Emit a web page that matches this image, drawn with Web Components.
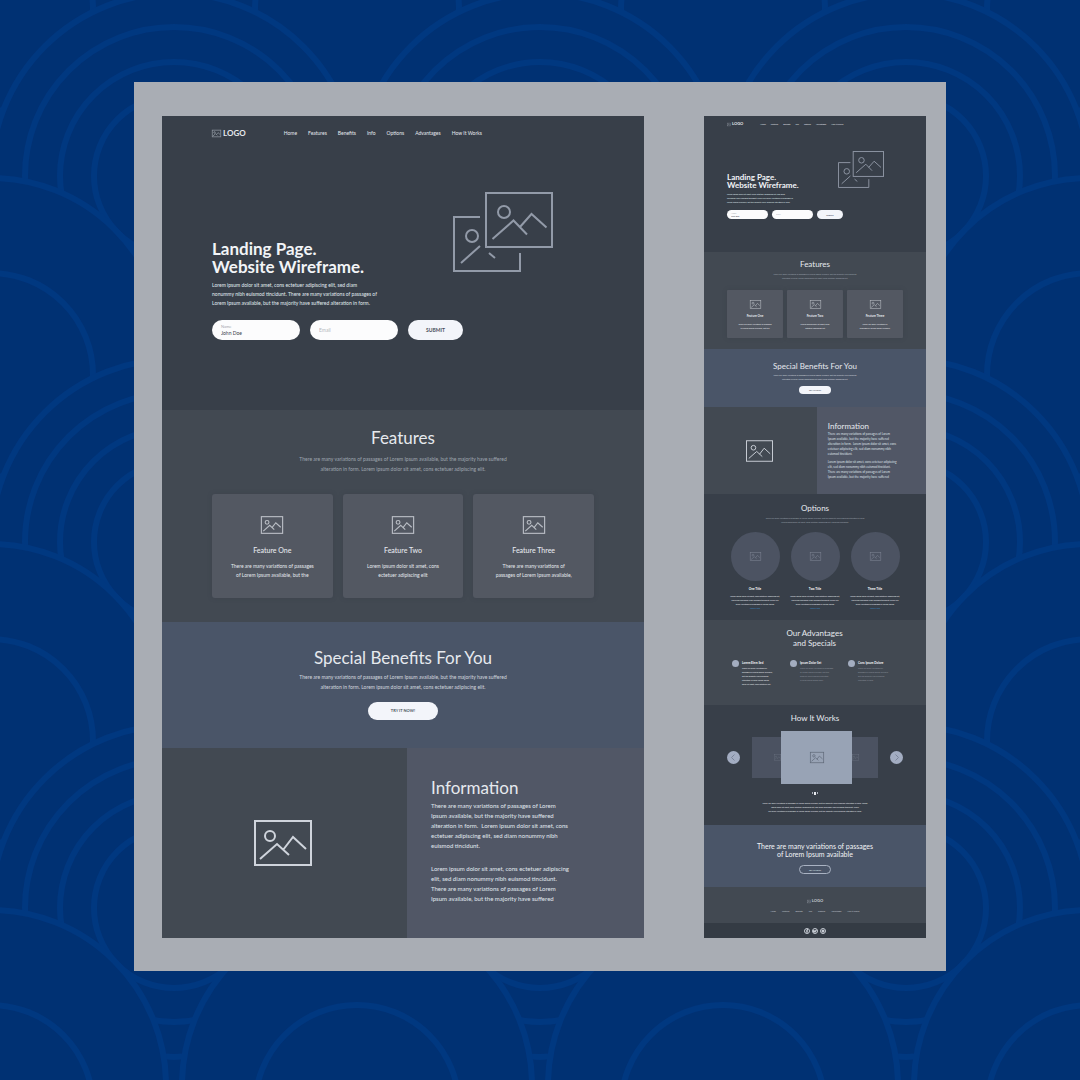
<!DOCTYPE html>
<html lang="en">
<head>
<meta charset="utf-8">
<title>Landing Page Website Wireframe</title>
<style>
  html, body { margin: 0; min-height: 100%; background: #003173; }
  body { font-family: Lato, "Open Sans", sans-serif; color: #e6e9ee; }
</style>
</head>
<body>
<wire-stage>
  <wire-page></wire-page>
  <wire-page compact></wire-page>
</wire-stage>

<script>
const define = (name, css, html) => customElements.define(name, class extends HTMLElement {
  constructor() {
    super();
    const t = document.createElement('template');
    t.innerHTML = `<style>*{box-sizing:border-box}h1,h2,h3,p{margin:0;font-weight:400}:host{display:block;box-sizing:border-box}${css}</style>` +
      (typeof html === 'function' ? html(this) : html);
    this.attachShadow({ mode: 'open' }).append(t.content.cloneNode(true));
  }
});

/* ---------- backdrop of overlapping scales ---------- */
const scaleRows = () => {
  let out = '';
  const ring = (x, y, r, fill) => `<circle cx="${x}" cy="${y}" r="${r}" fill="${fill}"/>`;
  for (let row = 0; row < 4; row++) {
    for (let i = -1; i < 4; i++) {
      const x = -9 + 366 * i, y = -13 + 366 * row;
      out += ring(x, y, 175, '#003173') + ring(x, y + 22, 102, 'none');
    }
    for (let i = -1; i < 4; i++) {
      const x = 174 + 366 * i, y = 176 + 366 * row;
      out += ring(x, y, 183, '#003173') + ring(x, y, 149, 'none') + ring(x, y, 114, 'none') + ring(x, y, 80, 'none');
    }
  }
  return out;
};
define('scale-backdrop',
  `:host{overflow:hidden} svg{display:block;width:100%;height:100%}`,
  () => `<svg viewBox="0 0 1080 1080" preserveAspectRatio="xMidYMin slice" stroke="#003880" stroke-width="6" aria-hidden="true">${scaleRows()}</svg>`);

/* ---------- pictures ---------- */
define('picture-icon',
  `svg{display:block;width:100%;height:100%;overflow:visible}`,
  el => `<svg viewBox="0 0 58 46" fill="none" stroke="currentColor" stroke-width="${el.getAttribute('stroke') || 2}" aria-hidden="true">
    <rect x="1" y="1" width="56" height="44"/><circle cx="16" cy="16" r="5"/>
    <path d="M6 39 23 24 35 35M29 30 39 17 52 29"/></svg>`);
define('picture-stack',
  `svg{display:block;width:100%;height:100%}`,
  `<svg viewBox="0 0 100 80" fill="none" stroke="currentColor" stroke-width="2" aria-hidden="true">
    <rect x="33" y="1" width="66" height="54"/><circle cx="51" cy="20" r="6"/>
    <path d="M39.500 47 60.500 28.500 74 42.500M66.500 35.500 78.500 22 93.500 35.500"/>
    <path d="M27 25H1V79H67V61M8 71 27 54M36 61 42 66"/><circle cx="19" cy="44" r="6"/></svg>`);

/* ---------- small parts ---------- */
define('wire-logo',
  `:host{display:flex;align-items:center;gap:var(--logo-gap);font-size:var(--logo-fs);font-weight:700;line-height:var(--nav-lh)}
   picture-icon{width:var(--logo-w);height:var(--logo-h);color:#8f96a0}`,
  `<picture-icon stroke="5"></picture-icon><span>LOGO</span>`);
define('wire-links',
  `nav{display:flex;gap:var(--link-gap);font-size:var(--copy-fs);line-height:var(--nav-lh)}
   a{color:inherit;text-decoration:none;white-space:nowrap}`,
  `<nav><a href="#">Home</a><a href="#">Features</a><a href="#">Benefits</a><a href="#">Info</a><a href="#">Options</a><a href="#">Advantages</a><a href="#">How It Works</a></nav>`);
define('pill-button',
  `button{display:block;font:700 var(--btn-fs)/1 Lato,sans-serif;color:#4a515b;background:#f3f5fa;border:0;border-radius:99px;padding:0;width:100%;height:100%}
   :host([outline]) button{background:none;border:1px solid #a9b2c2;color:#dde2ea}`,
  `<button type="button"><slot></slot></button>`);
define('section-head',
  `:host{text-align:center}
   h2{font-size:var(--head-fs);line-height:var(--head-lh)}
   p{font-size:var(--copy-fs);line-height:var(--lead-lh);margin-top:var(--head-gap,var(--lead-gap));color:var(--lead-color,#9aa1ab);font-weight:500}`,
  `<h2><slot></slot></h2><p><slot name="lead"></slot></p>`);

/* ---------- hero ---------- */
define('hero-section',
  `:host{background:#383f49;padding:var(--nav-top) var(--side) var(--hero-bottom)}
   header{display:flex;align-items:center;gap:var(--nav-gap)}
   .main{display:flex;justify-content:space-between;align-items:flex-start;padding:var(--main-top) var(--art-right) 0 0}
   .text{padding-top:var(--text-top);flex:none}
   h1{font-size:var(--hero-fs);line-height:var(--hero-lh);font-weight:700;color:#f2f4f7}
   p{font-size:var(--copy-fs);line-height:var(--copy-lh);margin-top:var(--hero-gap);white-space:nowrap;color:#dfe2e7;font-weight:500}
   form{display:flex;gap:var(--field-gap);margin-top:var(--form-gap)}
   label{display:flex;flex-direction:column;justify-content:center;width:var(--field-w);height:var(--field-h);padding:0 var(--field-pad);background:#fcfcfd;border-radius:99px;color:#a4a8ae}
   label span{font-size:var(--tiny-fs);line-height:var(--tiny-lh)}
   input{font:var(--copy-fs)/var(--tiny-lh) Lato,sans-serif;color:#3a414b;border:0;padding:0;width:100%;height:var(--tiny-lh);background:none}
   input::placeholder{color:#b4b8be}
   .hero-btn{width:var(--submit-w);height:var(--field-h)}
   picture-stack{width:var(--art-w);height:var(--art-h);color:#929aa8;flex:none;margin-left:calc(0px - var(--art-w))}`,
  `<header><wire-logo></wire-logo><wire-links></wire-links></header>
   <div class="main"><div class="text">
     <h1>Landing Page.<br>Website Wireframe.</h1>
     <p>Lorem ipsum dolor sit amet, cons ectetuer adipiscing elit, sed diam<br>nonummy nibh euismod tincidunt. There are many variations of passages of<br>Lorem Ipsum available, but the majority have suffered alteration in form.</p>
     <form><label><span>Name</span><input type="text" value="John Doe"></label>
     <label><input type="email" placeholder="Email" aria-label="Email"></label>
     <pill-button class="hero-btn">SUBMIT</pill-button></form>
   </div><picture-stack></picture-stack></div>`);

/* ---------- features ---------- */
define('feature-card',
  `:host{background:#535862;border-radius:var(--radius);box-shadow:0 0 4px #363d4666;padding:var(--card-top) 0 var(--card-bottom);text-align:center}
   picture-icon{width:var(--icon-w);height:var(--icon-h);margin:0 auto;color:#b9bdc4}
   h3{font-size:var(--sub-fs);line-height:var(--sub-lh);margin-top:var(--sub-gap);font-weight:var(--sub-weight)}
   p{font-size:var(--copy-fs);line-height:var(--copy-lh);margin-top:var(--body-gap)}`,
  `<picture-icon stroke="3"></picture-icon><h3><slot name="title"></slot></h3><p><slot></slot></p>`);
define('features-section',
  `:host{background:#424952;padding:var(--feat-top) var(--side) var(--feat-bottom)}
   .cards{display:grid;grid-template-columns:repeat(3,1fr);gap:var(--card-gap);margin-top:var(--cards-gap)}`,
  `<section-head>Features<span slot="lead">There are many variations of passages of Lorem Ipsum available, but the majority have suffered<br>alteration in form. Lorem ipsum dolor sit amet, cons ectetuer adipiscing elit.</span></section-head>
   <div class="cards">
     <feature-card><span slot="title">Feature One</span>There are many variations of passages<br>of Lorem Ipsum available, but the</feature-card>
     <feature-card><span slot="title">Feature Two</span>Lorem ipsum dolor sit amet, cons<br>ectetuer adipiscing elit</feature-card>
     <feature-card><span slot="title">Feature Three</span>There are many variations of<br>passages of Lorem Ipsum available,</feature-card>
   </div>`);

/* ---------- benefits ---------- */
define('benefits-section',
  `:host{background:#4a5568;padding:var(--ben-top) var(--side) var(--ben-bottom);--lead-color:#cbd0d9;--head-gap:var(--ben-gap)}
   pill-button{width:var(--btn-w);height:var(--btn-h);margin:var(--btn-gap) auto 0;--btn-fs:var(--tiny-fs)}`,
  `<section-head>Special Benefits For You<span slot="lead">There are many variations of passages of Lorem Ipsum available, but the majority have suffered<br>alteration in form. Lorem ipsum dolor sit amet, cons ectetuer adipiscing elit.</span></section-head>
   <pill-button>TRY IT NOW!</pill-button>`);

/* ---------- information ---------- */
define('info-section',
  `:host{display:grid;grid-template-columns:245fr 237fr}
   .pic{background:#424952;display:grid;place-items:center;padding-right:var(--pic-pad)}
   .pic picture-icon{width:var(--pic-w);height:var(--pic-h);color:#cfd4dc}
   .text{background:#515766;padding:var(--info-top) 0 var(--info-bottom) var(--info-left)}
   h2{font-size:var(--head-fs);line-height:var(--head-lh)}
   p{font-size:var(--info-fs);line-height:var(--info-lh);color:#dde0e6;white-space:nowrap;font-weight:var(--info-weight)}
   h2+p{margin-top:var(--info-gap)} p+p{margin-top:var(--para-gap)}`,
  `<div class="pic"><picture-icon></picture-icon></div>
   <div class="text"><h2>Information</h2>
   <p>There are many variations of passages of Lorem<br>Ipsum available, but the majority have suffered<br>alteration in form.&nbsp; Lorem ipsum dolor sit amet, cons<br>ectetuer adipiscing elit, sed diam nonummy nibh<br>euismod tincidunt.</p>
   <p>Lorem ipsum dolor sit amet, cons ectetuer adipiscing<br>elit, sed diam nonummy nibh euismod tincidunt.<br>There are many variations of passages of Lorem<br>Ipsum available, but the majority have suffered</p></div>`);

/* ---------- options ---------- */
define('option-item',
  `:host{text-align:center;line-height:4px;font-size:2px}
   .disc{width:49px;height:49px;border-radius:50%;background:#4c5362;display:grid;place-items:center;margin:0 auto 5px}
   picture-icon{width:11px;height:9px;color:#7b8291}
   h3{font-size:3px;line-height:6px;font-weight:700;margin-bottom:2px;color:#fff}
   p{white-space:nowrap} a{display:block;color:#3a8ccb;text-decoration:none}`,
  `<div class="disc"><picture-icon stroke="3"></picture-icon></div><h3><slot name="title"></slot></h3>
   <p>Lorem ipsum dolor sit amet, cons ectetuer adipiscing elit,<br>sed diam nonummy nibh euismod tincidunt. There are<br>many variations of passages of Lorem Ipsum</p><a href="#">Learn More</a>`);
define('options-section',
  `:host{background:#383f49;padding:9px 21px 10px}
   .row{display:grid;grid-template-columns:repeat(3,1fr);margin-top:8px}`,
  `<section-head>Options<span slot="lead">There are many variations of passages of Lorem Ipsum available, but the majority have suffered alteration in form<br>Lorem ipsum dolor sit amet, cons ectetuer adipiscing elit, sed diam nonummy</span></section-head>
   <div class="row"><option-item><span slot="title">One Title</span></option-item><option-item><span slot="title">Two Title</span></option-item><option-item><span slot="title">Three Title</span></option-item></div>`);

/* ---------- advantages ---------- */
define('advantage-item',
  `:host{display:flex;gap:3px;color:#8d949e;font-size:2px;line-height:4px}
   :host([bright]){color:#e6e9ee}
   i{flex:none;width:7px;height:7px;border-radius:50%;background:#a3adc0}
   h3{font-size:3px;line-height:6px;font-weight:700;color:#f2f4f7} p{white-space:nowrap}`,
  `<i></i><div><h3><slot name="title"></slot></h3><p><slot></slot></p></div>`);
define('advantages-section',
  `:host{background:#424952;padding:8px 20px 19px 28px}
   h2{font-size:8px;line-height:10px;text-align:center;padding-right:9px}
   .row{display:grid;grid-template-columns:repeat(3,1fr);margin-top:12px}`,
  `<h2>Our Advantages<br>and Specials</h2><div class="row">
   <advantage-item bright><span slot="title">Lorem Elem Sed</span>There are many variations of<br>passages of Lorem Ipsum available,<br>but the majority have suffered<br>alteration in form Lorem ipsum<br>dolor sit amet, cons ectetuer elit.</advantage-item>
   <advantage-item><span slot="title">Ipsum Dolor Set</span>There are many variations of passages<br>of Lorem Ipsum available, but the<br>majority have suffered alteration<br>in form Lorem ipsum dolor</advantage-item>
   <advantage-item><span slot="title">Cons Ipsum Dolore</span>There are many variations of<br>passages of Lorem Ipsum available,<br>but the majority have suffered<br>alteration in form</advantage-item></div>`);

/* ---------- how it works ---------- */
define('arrow-button',
  `button{display:grid;place-items:center;width:13px;height:13px;padding:0;border:0;border-radius:50%;background:#a3adc2}
   svg{width:9px;height:9px} :host([back]) svg{rotate:180deg}`,
  el => `<button type="button" aria-label="${el.hasAttribute('back') ? 'Previous' : 'Next'}"><svg viewBox="0 0 9 9" fill="none" stroke="#7b859a"><path d="M3.500 1.500 6.500 4.500 3.500 7.500"/></svg></button>`);
define('steps-section',
  `:host{background:#383f49;padding:8px 23px 12px;text-align:center}
   h2{font-size:8px;line-height:10px}
   .slider{display:flex;align-items:center;justify-content:space-between;margin-top:8px}
   .slides{display:flex;align-items:center}
   .slide{display:grid;place-items:center;width:29px;height:41px;background:#4b5261;overflow:hidden}
   .slide.cur{width:71px;height:53px;background:#98a3b5}
   .slide.prev{justify-items:end}.slide.next{width:26px;justify-items:start}
   .slide picture-icon{width:7px;height:9px;color:#7b8291}
   .slide.cur picture-icon{width:14px;height:11px;color:#5f6979}
   .dots{display:flex;justify-content:center;align-items:center;gap:1px;height:4px;margin-top:7px}
   .dots i{width:1px;height:2px;background:#aab0bb}.dots i.on{width:2px;height:3px;background:#e6e9ee}
   p{font-size:2px;line-height:4px;margin-top:6px}`,
  `<h2>How It Works</h2>
   <div class="slider"><arrow-button back></arrow-button>
     <div class="slides"><div class="slide prev"><picture-icon></picture-icon></div><div class="slide cur"><picture-icon stroke="3"></picture-icon></div><div class="slide next"><picture-icon></picture-icon></div></div>
     <arrow-button></arrow-button></div>
   <div class="dots"><i></i><i class="on"></i><i></i></div>
   <p>There are many variations of passages of Lorem Ipsum available, but the majority have suffered alteration in form. Lorem<br>ipsum dolor sit amet, cons ectetuer adipiscing elit, sed diam nonummy nibh euismod tincidunt. There<br>are many variations of passages of Lorem Ipsum available, but the majority have suffered alteration in form.</p>`);

/* ---------- closing call and footer ---------- */
define('closing-section',
  `:host{background:#4a5568;padding:17px 23px 13px;text-align:center}
   h2{font-size:7px;line-height:8px;color:#f2f4f7}
   pill-button{width:32px;height:9px;margin:7px auto 0;--btn-fs:2px}`,
  `<h2>There are many variations of passages<br>of Lorem Ipsum available</h2><pill-button outline>TRY IT NOW!</pill-button>`);
define('wire-footer',
  `.top{background:#424952;padding:11px 23px 10px;display:flex;flex-direction:column;align-items:center;gap:5px;color:#c7ccd4;--nav-lh:6px}
   wire-links{--nav-lh:4px;--link-gap:6px}
   .bar{background:#343b44;padding:5px 0 4px;display:flex;justify-content:center;gap:2px}
   .bar a{display:grid;place-items:center;width:6px;height:6px;border-radius:50%;border:1px solid #c7ccd4;color:#c7ccd4}
   svg{width:4px;height:4px}`,
  `<div class="top"><wire-logo></wire-logo><wire-links></wire-links></div>
   <div class="bar">
    <a href="#" aria-label="Facebook"><svg viewBox="0 0 4 4" fill="none" stroke="currentColor"><path d="M3 0.500H2V4M1 2H3"/></svg></a>
    <a href="#" aria-label="Twitter"><svg viewBox="0 0 4 4" fill="currentColor"><path d="M0 1 2 1.500 3 0.500 4 1 2.500 3.500 0 3.500Z"/></svg></a>
    <a href="#" aria-label="Instagram"><svg viewBox="0 0 4 4" fill="currentColor"><circle cx="2" cy="2" r="1.500"/></svg></a></div>`);

/* ---------- one page of the board, in two sizes ---------- */
define('wire-page',
  `:host{min-width:0;overflow:hidden;
     --side:50px;--nav-top:12px;--nav-lh:10px;--nav-gap:38px;--link-gap:11px;--logo-fs:8px;--logo-gap:2px;--logo-w:9px;--logo-h:7px;
     --copy-fs:5px;--copy-lh:9px;--lead-lh:10px;--lead-gap:6px;--tiny-fs:4px;--tiny-lh:6px;--btn-fs:5px;
     --head-fs:17px;--head-lh:20px;--sub-fs:7px;--sub-lh:12px;--sub-gap:10px;--body-gap:6px;--sub-weight:500;
     --main-top:54px;--art-right:41px;--text-top:48px;--hero-fs:17px;--hero-lh:18px;--hero-gap:5px;--form-gap:12px;--hero-bottom:70px;
     --field-gap:10px;--field-w:88px;--field-h:20px;--field-pad:9px;--submit-w:55px;--art-w:100px;--art-h:80px;
     --feat-top:18px;--feat-bottom:24px;--cards-gap:20px;--card-gap:10px;--card-top:22px;--card-bottom:18px;--radius:3px;--icon-w:22px;--icon-h:18px;
     --ben-top:26px;--ben-gap:4px;--ben-bottom:28px;--btn-w:70px;--btn-h:18px;--btn-gap:10px;
     --pic-w:58px;--pic-h:46px;--pic-pad:4px;--info-top:30px;--info-left:24px;--info-bottom:34px;--info-gap:3px;--info-fs:6px;--info-lh:10px;--para-gap:13px;--info-weight:500}
   :host([compact]){
     --side:23px;--nav-top:5px;--nav-lh:6px;--nav-gap:17px;--link-gap:5px;--logo-fs:4px;--logo-gap:1px;--logo-w:4px;--logo-h:3px;
     --copy-fs:2px;--copy-lh:4px;--lead-lh:4px;--lead-gap:3px;--tiny-fs:2px;--tiny-lh:3px;--btn-fs:2px;
     --head-fs:8px;--head-lh:10px;--sub-fs:3px;--sub-lh:6px;--sub-gap:4px;--body-gap:3px;--sub-weight:700;
     --main-top:24px;--art-right:19px;--text-top:22px;--hero-fs:8px;--hero-lh:8px;--hero-gap:3px;--form-gap:6px;--hero-bottom:33px;
     --field-gap:4px;--field-w:41px;--field-h:9px;--field-pad:4px;--submit-w:26px;--art-w:46px;--art-h:37px;
     --feat-top:7px;--feat-bottom:11px;--cards-gap:10px;--card-gap:4px;--card-top:10px;--card-bottom:8px;--radius:1px;--icon-w:11px;--icon-h:9px;
     --ben-top:12px;--ben-gap:2px;--ben-bottom:13px;--btn-w:32px;--btn-h:8px;--btn-gap:5px;
     --pic-w:27px;--pic-h:22px;--pic-pad:2px;--info-top:14px;--info-left:11px;--info-bottom:14px;--info-gap:1px;--info-fs:3px;--info-lh:5px;--para-gap:3px;--info-weight:400}`,
  el => `<hero-section></hero-section><features-section></features-section><benefits-section></benefits-section><info-section></info-section>` +
    (el.hasAttribute('compact') ? `<options-section></options-section><advantages-section></advantages-section><steps-section></steps-section><closing-section></closing-section><wire-footer></wire-footer>` : ''));

define('wire-stage',
  `:host{position:relative;min-height:100vh;padding:82px 134px;overflow:hidden}
   scale-backdrop{position:absolute;inset:0}
   main{position:relative;display:grid;grid-template-columns:482fr 222fr;gap:60px;align-items:start;background:#a9adb4;padding:34px 20px 33px 28px}`,
  `<scale-backdrop></scale-backdrop><main><slot></slot></main>`);
</script>
</body>
</html>
